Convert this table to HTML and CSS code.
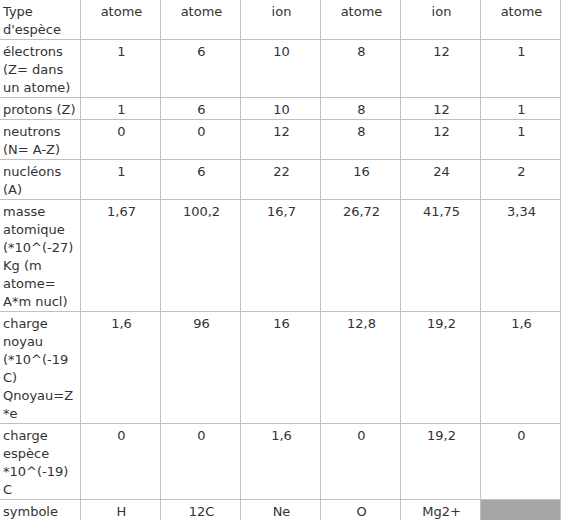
FILE: index.html
```html
<!DOCTYPE html>
<html lang="fr">
<head>
<meta charset="utf-8">
<title>Tableau</title>
<link rel="stylesheet" href="styles.css">
</head>
<body>
<table class="grid">
  <colgroup>
    <col class="c-label">
    <col class="c-val"><col class="c-val"><col class="c-val">
    <col class="c-val"><col class="c-val"><col class="c-val">
  </colgroup>
  <tr>
    <td class="label">Type<br>d'espèce</td>
    <td>atome</td><td>atome</td><td>ion</td><td>atome</td><td>ion</td><td>atome</td>
  </tr>
  <tr>
    <td class="label">électrons<br>(Z= dans<br>un atome)</td>
    <td>1</td><td>6</td><td>10</td><td>8</td><td>12</td><td>1</td>
  </tr>
  <tr>
    <td class="label">protons (Z)</td>
    <td>1</td><td>6</td><td>10</td><td>8</td><td>12</td><td>1</td>
  </tr>
  <tr>
    <td class="label">neutrons<br>(N= A-Z)</td>
    <td>0</td><td>0</td><td>12</td><td>8</td><td>12</td><td>1</td>
  </tr>
  <tr>
    <td class="label">nucléons<br>(A)</td>
    <td>1</td><td>6</td><td>22</td><td>16</td><td>24</td><td>2</td>
  </tr>
  <tr>
    <td class="label">masse<br>atomique<br>(*10^(-27)<br>Kg (m<br>atome=<br>A*m nucl)</td>
    <td>1,67</td><td>100,2</td><td>16,7</td><td>26,72</td><td>41,75</td><td>3,34</td>
  </tr>
  <tr>
    <td class="label">charge<br>noyau<br>(*10^(-19<br>C)<br>Qnoyau=Z<br>*e</td>
    <td>1,6</td><td>96</td><td>16</td><td>12,8</td><td>19,2</td><td>1,6</td>
  </tr>
  <tr>
    <td class="label">charge<br>espèce<br>*10^(-19)<br>C</td>
    <td>0</td><td>0</td><td>1,6</td><td>0</td><td>19,2</td><td>0</td>
  </tr>
  <tr>
    <td class="label">symbole</td>
    <td>H</td><td>12C</td><td>Ne</td><td>O</td><td>Mg2+</td><td class="empty"></td>
  </tr>
</table>
</body>
</html>
```
FILE: styles.css
```css
html, body {
  margin: 0;
  padding: 0;
  background: #ffffff;
}

body {
  font-family: "DejaVu Sans", Verdana, sans-serif;
  font-size: 13px;
  line-height: 18px;
  color: #333333;
}

.grid {
  border-collapse: separate;
  border-spacing: 0;
  table-layout: fixed;
  width: 561px;
}

.c-label { width: 81px; }
.c-val { width: 80px; }

.grid td {
  box-sizing: border-box;
  border-right: 1px solid #c0c0c0;
  border-bottom: 1px solid #c0c0c0;
  padding: 3px 1px 0 3px;
  vertical-align: top;
  text-align: center;
  white-space: nowrap;
}

.grid td.label {
  text-align: left;
}

.grid td.empty {
  background: #a6a6a6;
}
```
